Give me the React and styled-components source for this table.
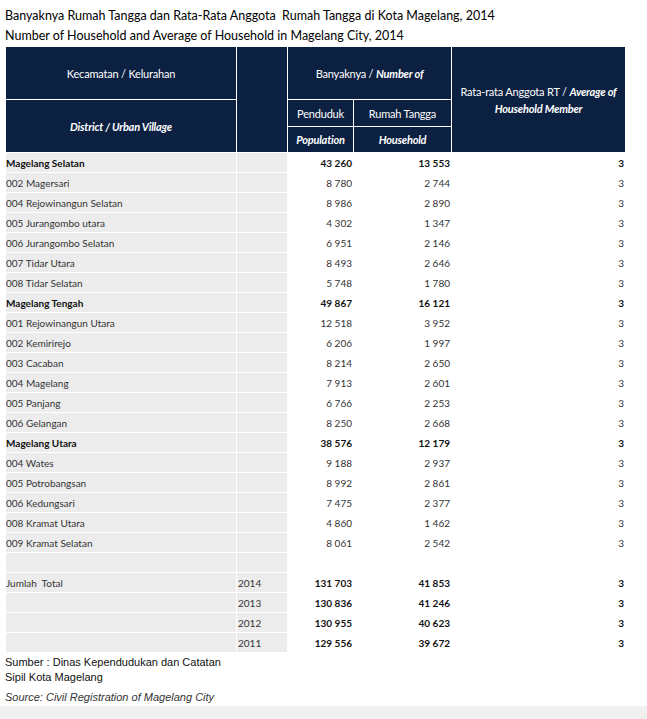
import React from "react";
import styled, { createGlobalStyle } from "styled-components";

const GlobalStyle = createGlobalStyle`
    html, body {
        margin: 0;
        padding: 0;
        background: #ffffff;
    }
    body {
        font-family: Lato, "Open Sans", sans-serif;
        color: #1a1a1a;
    }
`;

const Page = styled.div`
    width: 647px;
    height: 719px;
    display: flex;
    flex-direction: column;
    overflow: hidden;
`;

const Content = styled.div`
    flex: 1;
    padding: 6px 0 0 5px;
`;

const Title = styled.div`
    font-family: Lato, sans-serif;
    font-size: 12.5px;
    line-height: 20px;
    color: #000;
    white-space: pre;
`;

const Table = styled.table`
    margin-top: 0;
    width: 620px;
    table-layout: fixed;
    border-collapse: collapse;
    font-family: Lato, sans-serif;
`;

const HeadCell = styled.th`
    background: #0c2142;
    color: #ffffff;
    border: 1px solid #ffffff;
    font-size: 11px;
    font-weight: 400;
    text-align: center;
    vertical-align: middle;
    padding: 0 2px;
    height: ${(p) => p.$h || 25}px;
    line-height: 17px;
    letter-spacing: -0.2px;

    em {
        font-weight: 700;
    }
`;

const Row = styled.tr`
    height: 20px;
`;

const LabelCell = styled.td`
    background: #ececec;
    border: 1px solid #ffffff;
    font-size: 10px;
    font-weight: ${(p) => (p.$bold ? 700 : 400)};
    color: ${(p) => (p.$bold ? "#111" : "#333")};
    padding: 0;
    white-space: pre;
    overflow: hidden;
`;

const YearCell = styled(LabelCell)`
    padding-left: 1px;
`;

const NumCell = styled.td`
    background: #ffffff;
    border: 1px solid #ffffff;
    font-size: 10px;
    font-weight: ${(p) => (p.$bold ? 700 : 400)};
    color: ${(p) => (p.$bold ? "#111" : "#333")};
    text-align: right;
    padding: 0 1px 0 0;
    white-space: nowrap;
`;

const Note = styled.div`
    font-family: "Liberation Sans", Arial, sans-serif;
    font-size: 11px;
    line-height: 15px;
    font-style: ${(p) => (p.$italic ? "italic" : "normal")};
    margin-top: ${(p) => p.$top || 0}px;
    color: ${(p) => (p.$italic ? "#333" : "#111")};
`;

const BottomBar = styled.div`
    height: 13px;
    background: #f0f0f0;
`;

const rows = [
    { name: "Magelang Selatan", pop: "43 260", hh: "13 553", avg: "3", bold: true },
    { name: "002 Magersari", pop: "8 780", hh: "2 744", avg: "3" },
    { name: "004 Rejowinangun Selatan", pop: "8 986", hh: "2 890", avg: "3" },
    { name: "005 Jurangombo utara", pop: "4 302", hh: "1 347", avg: "3" },
    { name: "006 Jurangombo Selatan", pop: "6 951", hh: "2 146", avg: "3" },
    { name: "007 Tidar Utara", pop: "8 493", hh: "2 646", avg: "3" },
    { name: "008 Tidar Selatan", pop: "5 748", hh: "1 780", avg: "3" },
    { name: "Magelang Tengah", pop: "49 867", hh: "16 121", avg: "3", bold: true },
    { name: "001 Rejowinangun Utara", pop: "12 518", hh: "3 952", avg: "3" },
    { name: "002 Kemirirejo", pop: "6 206", hh: "1 997", avg: "3" },
    { name: "003 Cacaban", pop: "8 214", hh: "2 650", avg: "3" },
    { name: "004 Magelang", pop: "7 913", hh: "2 601", avg: "3" },
    { name: "005 Panjang", pop: "6 766", hh: "2 253", avg: "3" },
    { name: "006 Gelangan", pop: "8 250", hh: "2 668", avg: "3" },
    { name: "Magelang Utara", pop: "38 576", hh: "12 179", avg: "3", bold: true },
    { name: "004 Wates", pop: "9 188", hh: "2 937", avg: "3" },
    { name: "005 Potrobangsan", pop: "8 992", hh: "2 861", avg: "3" },
    { name: "006 Kedungsari", pop: "7 475", hh: "2 377", avg: "3" },
    { name: "008 Kramat Utara", pop: "4 860", hh: "1 462", avg: "3" },
    { name: "009 Kramat Selatan", pop: "8 061", hh: "2 542", avg: "3" },
];

const totals = [
    { name: "Jumlah  Total", year: "2014", pop: "131 703", hh: "41 853" },
    { name: "", year: "2013", pop: "130 836", hh: "41 246" },
    { name: "", year: "2012", pop: "130 955", hh: "40 623" },
    { name: "", year: "2011", pop: "129 556", hh: "39 672" },
];

export default function App() {
    return (
        <Page>
            <GlobalStyle />
            <Content>
                <Title>Banyaknya Rumah Tangga dan Rata-Rata Anggota  Rumah Tangga di Kota Magelang, 2014</Title>
                <Title>Number of Household and Average of Household in Magelang City, 2014</Title>
                <Table>
                    <colgroup>
                        <col style={{ width: 231 }} />
                        <col style={{ width: 51 }} />
                        <col style={{ width: 66 }} />
                        <col style={{ width: 98 }} />
                        <col style={{ width: 174 }} />
                    </colgroup>
                    <thead>
                        <tr>
                            <HeadCell $h={52}>Kecamatan / Kelurahan</HeadCell>
                            <HeadCell rowSpan={3}></HeadCell>
                            <HeadCell colSpan={2}>
                                Banyaknya / <em>Number of</em>
                            </HeadCell>
                            <HeadCell rowSpan={3}>
                                Rata-rata Anggota RT / <em>Average of</em>
                                <br />
                                <em>Household Member</em>
                            </HeadCell>
                        </tr>
                        <tr>
                            <HeadCell rowSpan={2}>
                                <em>District / Urban Village</em>
                            </HeadCell>
                            <HeadCell $h={26}>Penduduk</HeadCell>
                            <HeadCell $h={26}>Rumah Tangga</HeadCell>
                        </tr>
                        <tr>
                            <HeadCell $h={25}>
                                <em>Population</em>
                            </HeadCell>
                            <HeadCell $h={25}>
                                <em>Household</em>
                            </HeadCell>
                        </tr>
                    </thead>
                    <tbody>
                        {rows.map((r) => (
                            <Row key={r.name}>
                                <LabelCell $bold={r.bold}>{r.name}</LabelCell>
                                <YearCell />
                                <NumCell $bold={r.bold}>{r.pop}</NumCell>
                                <NumCell $bold={r.bold}>{r.hh}</NumCell>
                                <NumCell $bold={r.bold}>{r.avg}</NumCell>
                            </Row>
                        ))}
                        <Row>
                            <LabelCell />
                            <YearCell />
                            <NumCell />
                            <NumCell />
                            <NumCell />
                        </Row>
                        {totals.map((t) => (
                            <Row key={t.year}>
                                <LabelCell>{t.name}</LabelCell>
                                <YearCell>{t.year}</YearCell>
                                <NumCell $bold>{t.pop}</NumCell>
                                <NumCell $bold>{t.hh}</NumCell>
                                <NumCell $bold>3</NumCell>
                            </Row>
                        ))}
                    </tbody>
                </Table>
                <Note $top={2}>Sumber : Dinas Kependudukan dan Catatan</Note>
                <Note>Sipil Kota Magelang</Note>
                <Note $italic $top={5}>Source: Civil Registration of Magelang City</Note>
            </Content>
            <BottomBar />
        </Page>
    );
}
